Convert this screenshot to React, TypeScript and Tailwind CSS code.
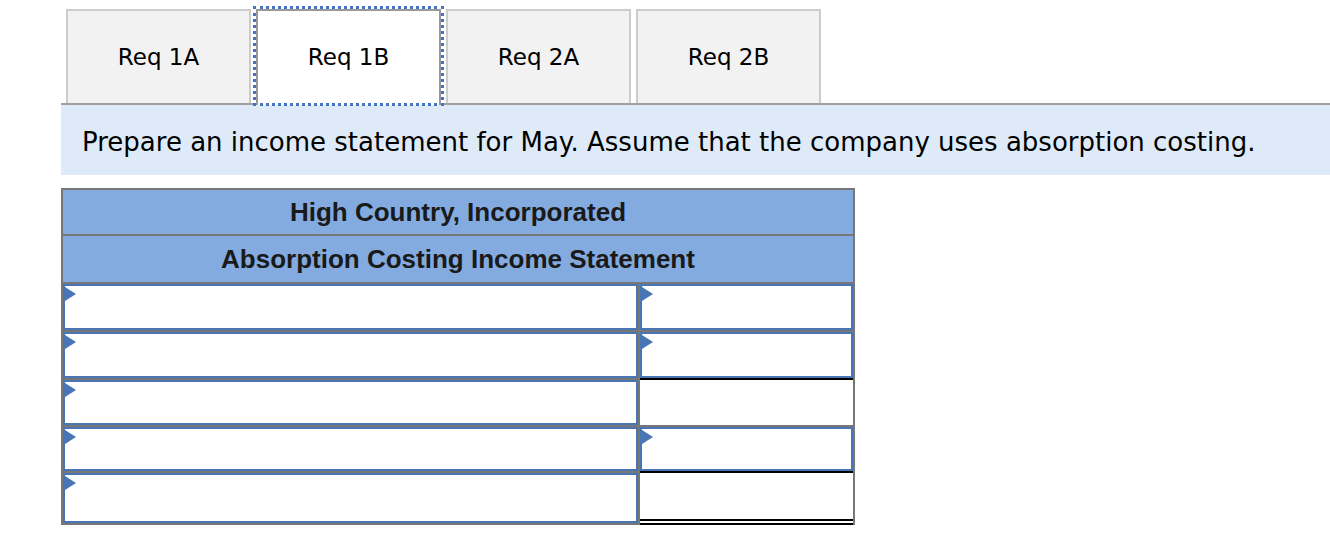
import React from "react";

const BLUE = "#4a75b5";

function Tri() {
  return (
    <svg
      className="absolute left-0 top-[1px]"
      width="11"
      height="14"
      viewBox="0 0 11 14"
    >
      <polygon points="0,0 11,7 0,14" fill={BLUE} />
    </svg>
  );
}

function InputBox() {
  return (
    <div className="relative w-full h-full border-2 border-[#4a75b5] bg-white">
      <Tri />
    </div>
  );
}

type Row = {
  h: string;
  rightInput: boolean;
  rightBottom: "grey" | "black" | "double";
  last?: boolean;
};

const rows: Row[] = [
  { h: "h-[48px]", rightInput: true, rightBottom: "grey" },
  { h: "h-[48px]", rightInput: true, rightBottom: "black" },
  { h: "h-[47px]", rightInput: false, rightBottom: "grey" },
  { h: "h-[46px]", rightInput: true, rightBottom: "black" },
  { h: "h-[52px]", rightInput: false, rightBottom: "double", last: true },
];

export default function App() {
  const tabs = ["Req 1A", "Req 1B", "Req 2A", "Req 2B"];
  return (
    <div className="w-[1330px] h-[534px] bg-white overflow-hidden">
      <div className="ml-[61px] pt-[9px]">
        {/* Tabs */}
        <div className="flex gap-[5px] pl-[5px] border-b-2 border-[#a0a0a0]">
          {tabs.map((t, i) =>
            i === 1 ? (
              <div
                key={t}
                className="relative z-10 -mb-[2px] w-[185px] h-[96px] bg-white border-2 border-b-0 border-[#999999] flex items-center justify-center text-[23px] text-black"
                style={{ fontFamily: "Verdana, 'DejaVu Sans', sans-serif" }}
              >
                <span className="pointer-events-none absolute left-[-5px] right-[-5px] top-[-5px] bottom-[-1px] border-[3px] border-dotted border-[#4472c4]" />
                <span className="-mt-[1px]">{t}</span>
              </div>
            ) : (
              <div
                key={t}
                className="w-[185px] h-[94px] bg-[#f2f2f2] border-2 border-b-0 border-[#cccccc] flex items-center justify-center text-[23px] text-black pt-[1px]"
                style={{ fontFamily: "Verdana, 'DejaVu Sans', sans-serif" }}
              >
                {t}
              </div>
            )
          )}
        </div>

        {/* Instruction */}
        <div
          className="h-[70px] bg-[#deeaf7] flex items-center pl-[21px] pt-[4px] text-[26px] text-black"
          style={{ fontFamily: "Verdana, 'DejaVu Sans', sans-serif" }}
        >
          Prepare an income statement for May. Assume that the company uses
          absorption costing.
        </div>

        {/* Table */}
        <div
          className="mt-[13px] w-[794px] border-2 border-b-0 border-[#777777]"
          style={{ fontFamily: "'Liberation Sans', Arial, sans-serif" }}
        >
          <div className="h-[46px] bg-[#83abe0] border-b-2 border-[#777777] flex items-center justify-center text-[26px] font-bold text-[#1a1a1a]">
            High Country, Incorporated
          </div>
          <div className="h-[48px] bg-[#83abe0] border-b-2 border-[#777777] flex items-center justify-center text-[26px] font-bold text-[#1a1a1a]">
            Absorption Costing Income Statement
          </div>
          {rows.map((r, i) => (
            <div key={i} className={`flex ${r.h}`}>
              <div className="w-[575px] h-full border-b-2 border-[#777777]">
                <InputBox />
              </div>
              <div className="w-[2px] h-full bg-[#777777]" />
              <div
                className={`w-[213px] h-full bg-white ${
                  r.rightBottom === "grey"
                    ? "border-b-2 border-[#777777]"
                    : r.rightBottom === "black"
                    ? "border-b-2 border-black"
                    : "border-b-[6px] border-double border-black"
                }`}
              >
                {r.rightInput ? <InputBox /> : null}
              </div>
            </div>
          ))}
        </div>
      </div>
    </div>
  );
}
